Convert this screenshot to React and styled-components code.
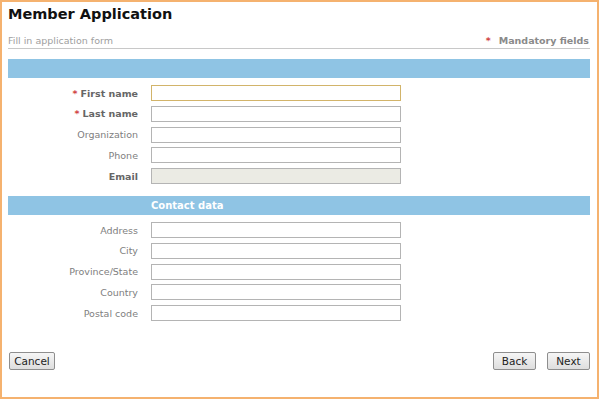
import React from 'react'
import styled, { createGlobalStyle } from 'styled-components'

const GlobalStyle = createGlobalStyle`
  html, body { margin: 0; padding: 0; background: #fff; }
  body { font-family: "DejaVu Sans", Verdana, sans-serif; }
`

const Frame = styled.div`
  box-sizing: border-box;
  width: 599px;
  height: 399px;
  border: 2px solid #f5b26f;
  padding: 3px 7px 0 6px;
  display: flex;
  flex-direction: column;
`

const Title = styled.h1`
  margin: 0;
  font-size: 14.5px;
  font-weight: bold;
  color: #111;
  line-height: 18px;
`

const Header = styled.div`
  margin-top: 12px;
  display: flex;
  justify-content: space-between;
  align-items: flex-end;
  border-bottom: 1px solid #c8c8c8;
  padding-bottom: 1px;
  font-size: 9.5px;
  line-height: 12px;
`

const Hint = styled.span`
  color: #a0a0a0;
`

const Mandatory = styled.span`
  color: #8a8a8a;
  font-weight: bold;
  padding-right: 1px;
`

const Star = styled.span`
  color: #d04040;
  margin-right: ${p => p.$gap || 4}px;
`

const Band = styled.div`
  margin-top: ${p => p.$top}px;
  height: 19px;
  background: #8fc4e4;
  display: grid;
  grid-template-columns: 143px 1fr;
  align-items: center;
  font-size: 10px;
  font-weight: bold;
  color: #fff;
`

const Rows = styled.div`
  margin-top: 7px;
  display: flex;
  flex-direction: column;
  gap: 4.75px;
`

const Row = styled.div`
  display: grid;
  grid-template-columns: 130px 250px;
  column-gap: 13px;
  align-items: center;
`

const Label = styled.label`
  text-align: right;
  font-size: 9.5px;
  color: ${p => (p.$strong ? '#666' : '#808080')};
  font-weight: ${p => (p.$strong ? 'bold' : 'normal')};
`

const Input = styled.input`
  box-sizing: border-box;
  width: 250px;
  height: 16px;
  margin: 0;
  padding: 0 3px;
  border: 1px solid ${p => (p.$focus ? '#d2b46a' : '#b4b4b4')};
  background: ${p => (p.disabled ? '#ebebe4' : '#fff')};
  font-size: 10px;
  outline: none;
`

const Footer = styled.div`
  margin-top: auto;
  margin-bottom: 27px;
  padding-left: 1px;
  display: flex;
  justify-content: space-between;
`

const Group = styled.div`
  display: flex;
  gap: 11px;
`

const Button = styled.button`
  box-sizing: border-box;
  height: 18px;
  width: ${p => p.$w}px;
  padding: 0;
  border: 1px solid #8e8e8e;
  border-radius: 2px;
  background: linear-gradient(#f6f6f6, #dedede);
  font-family: "DejaVu Sans", Tahoma, sans-serif;
  font-size: 10.5px;
  color: #222;
  line-height: 16px;
`

const personal = [
  { label: 'First name', required: true, focus: true },
  { label: 'Last name', required: true },
  { label: 'Organization' },
  { label: 'Phone' },
  { label: 'Email', strong: true, disabled: true },
]

const contact = ['Address', 'City', 'Province/State', 'Country', 'Postal code']

export default function App() {
  return (
    <>
      <GlobalStyle />
      <Frame>
        <Title>Member Application</Title>
        <Header>
          <Hint>Fill in application form</Hint>
          <Mandatory><Star $gap={8}>*</Star>Mandatory fields</Mandatory>
        </Header>
        <Band $top={10} />
        <Rows>
          {personal.map(f => (
            <Row key={f.label}>
              <Label $strong={f.required || f.strong}>
                {f.required && <Star $gap={3}>*</Star>}
                {f.label}
              </Label>
              <Input $focus={f.focus} disabled={f.disabled} />
            </Row>
          ))}
        </Rows>
        <Band $top={12}>
          <span />
          <span>Contact data</span>
        </Band>
        <Rows>
          {contact.map(l => (
            <Row key={l}>
              <Label>{l}</Label>
              <Input />
            </Row>
          ))}
        </Rows>
        <Footer>
          <Button $w={46}>Cancel</Button>
          <Group>
            <Button $w={43}>Back</Button>
            <Button $w={43}>Next</Button>
          </Group>
        </Footer>
      </Frame>
    </>
  )
}
